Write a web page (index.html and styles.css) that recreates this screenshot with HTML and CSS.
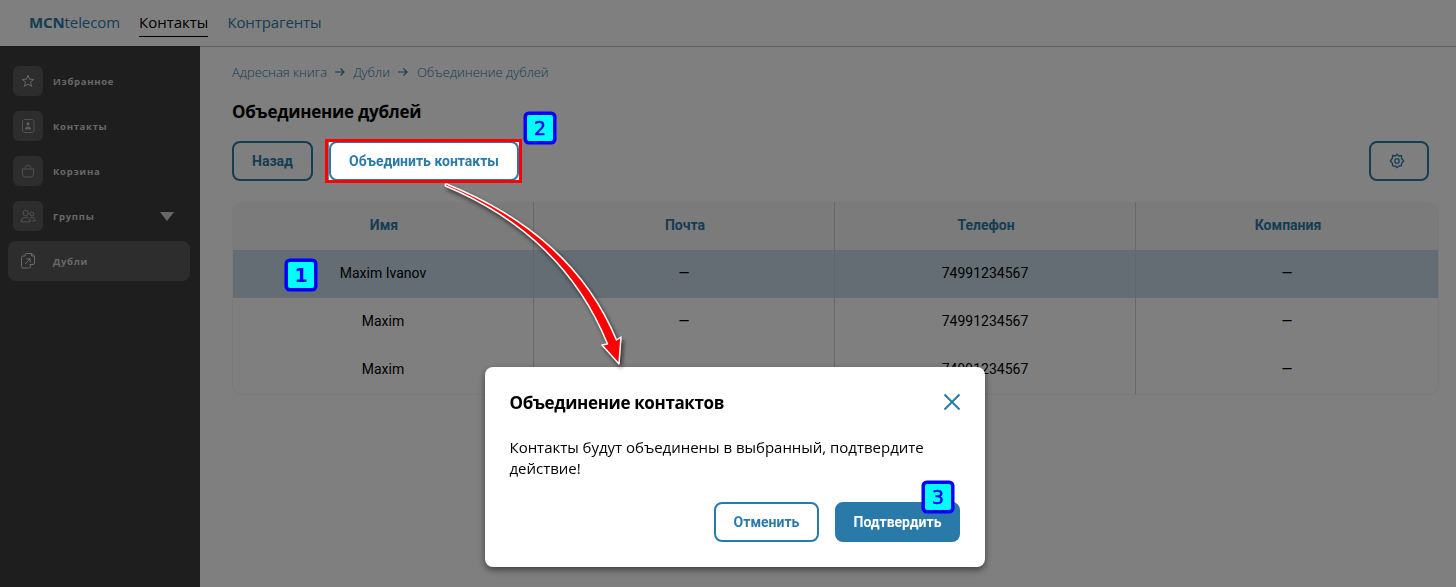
FILE: index.html
```html
<!DOCTYPE html>
<html lang="ru">
<head>
    <meta charset="UTF-8">
    <meta name="viewport" content="width=device-width, initial-scale=1.0">
    <title>Объединение дублей</title>
    <link rel="stylesheet" href="styles.css">
</head>
<body>
    <!-- Top navigation -->
    <header class="header">
        <a class="logo"><b>MCN</b>telecom</a>
        <nav class="nav">
            <a class="nav-link active">Контакты</a>
            <a class="nav-link agents">Контрагенты</a>
        </nav>
    </header>

    <div class="layout">
        <!-- Sidebar -->
        <aside class="sidebar">
            <a class="side-item">
                <span class="side-icon bright"><svg width="16" height="16" viewBox="0 0 16 16"><path d="M8 2.300l1.600 3.900 4.100.2-3.200 2.700 1.100 4.200L8 11.100l-3.600 2.200 1.100-4.200L2.300 6.400l4.100-.2z"/></svg></span>
                <span class="side-text">Избранное</span>
            </a>
            <a class="side-item">
                <span class="side-icon"><svg width="16" height="16" viewBox="0 0 16 16"><path d="M4 1.500h8.500L14 3v10l-1.500 1.500H4L2.500 13V3z"/><circle class="fill" cx="8" cy="5.900" r="1.700"/><path class="fill" d="M4.800 11.500c0-2.200 1.200-3 3.200-3s3.200.8 3.200 3z"/></svg></span>
                <span class="side-text">Контакты</span>
            </a>
            <a class="side-item">
                <span class="side-icon"><svg width="16" height="16" viewBox="0 0 16 16"><path d="M2 6h12l-.9 6.300q-.2 1.700-1.900 1.700H4.800q-1.700 0-1.900-1.700zM5 5.500C5.200 3.500 6.300 2.500 8 2.500s2.800 1 3 3"/></svg></span>
                <span class="side-text">Корзина</span>
            </a>
            <a class="side-item">
                <span class="side-icon"><svg width="16" height="16" viewBox="0 0 16 16"><circle cx="5.700" cy="5" r="2.700"/><circle cx="11.900" cy="6" r="1.900"/><path d="M1 13.900c0-6 9.400-6 9.400 0zM10.200 9.900c2.800-1 5 .3 5 3h-3"/></svg></span>
                <span class="side-text">Группы</span>
                <span class="caret"></span>
            </a>
            <a class="side-item selected">
                <span class="side-icon bright"><svg width="16" height="18" viewBox="0 0 16 18"><path d="M5 4V3q0-1.500 1.500-1.500h5.300L14.500 4v7q0 1.500-1.500 1.500H9.500M11.500 1.500V4h3M5 4H3Q1.500 4 1.500 5.500v9Q1.500 16 3 16h6q1.500 0 1.500-1.500v-2M5 12l5-5M6.500 6.800h3.700v3.500"/></svg></span>
                <span class="side-text">Дубли</span>
            </a>
        </aside>

        <!-- Content -->
        <main class="content">
            <div class="breadcrumbs">
                <a>Адресная книга</a>
                <svg width="10" height="10" viewBox="0 0 10 10"><path d="M0 5h9M5.500 1.500L9 5 5.500 8.500"/></svg>
                <a>Дубли</a>
                <svg width="10" height="10" viewBox="0 0 10 10"><path d="M0 5h9M5.500 1.500L9 5 5.500 8.500"/></svg>
                <a>Объединение дублей</a>
            </div>
            <h1>Объединение дублей</h1>

            <div class="toolbar">
                <button class="btn back">Назад</button>
                <div class="step-target">
                    <button class="btn merge">Объединить контакты</button>
                    <span class="step step-2">2</span>
                </div>
                <button class="btn settings"><svg width="16" height="16" viewBox="0 0 16 16"><path d="M8 1.300L9.800 3l2.600-.4.200 2.600L14.700 8l-2.100 2.200-.2 2.500-2.600.3L8 14.700 6.200 13l-2.600-.3-.2-2.500L1.300 8l2.100-2.800.2-2.600L6.200 3z"/><rect x="5.900" y="5.900" width="4.200" height="4.200" rx="1.300"/></svg></button>
            </div>

            <div class="table">
                <div class="row head">
                    <div class="cell">Имя</div>
                    <div class="cell">Почта</div>
                    <div class="cell">Телефон</div>
                    <div class="cell">Компания</div>
                </div>
                <div class="row picked">
                    <div class="cell">Maxim Ivanov<span class="step step-1">1</span></div>
                    <div class="cell">—</div>
                    <div class="cell">74991234567</div>
                    <div class="cell">—</div>
                </div>
                <div class="row">
                    <div class="cell">Maxim</div>
                    <div class="cell">—</div>
                    <div class="cell">74991234567</div>
                    <div class="cell">—</div>
                </div>
                <div class="row">
                    <div class="cell">Maxim</div>
                    <div class="cell">—</div>
                    <div class="cell">74991234567</div>
                    <div class="cell">—</div>
                </div>
            </div>
        </main>
    </div>

    <div class="overlay"></div>

    <!-- Confirm dialog -->
    <div class="modal">
        <div class="modal-head">
            <h2>Объединение контактов</h2>
            <svg class="close" width="18" height="18" viewBox="0 0 18 18"><path d="M1.500 1.500l15 15M16.500 1.500l-15 15"/></svg>
        </div>
        <p>Контакты будут объединены в выбранный, подтвердите<br>действие!</p>
        <div class="modal-actions">
            <button class="btn cancel">Отменить</button>
            <button class="btn confirm">Подтвердить<span class="step step-3">3</span></button>
        </div>
    </div>

    <!-- Arrow from the button to the dialog -->
    <svg class="arrow" width="220" height="210" viewBox="430 170 220 210">
        <path d="M446.500 184Q573 235 616.500 340L621 337 619 364 602 345 607.500 344Q563 235 445.500 186Q444.500 184 446.500 184z"/>
    </svg>
</body>
</html>
```
FILE: styles.css
```css
* {
    margin: 0;
    padding: 0;
    box-sizing: border-box;
}

body {
    height: 587px;
    overflow: hidden;
    display: flex;
    flex-direction: column;
    background: white;
    color: black;
    font-family: 'Open Sans', 'Noto Sans', sans-serif;
}
svg {
    fill: none;
    stroke: #2a7aa9;
}

/* Header */
.header {
    height: 46px;
    display: flex;
    align-items: flex-start;
    padding: 9px 29px 0;
    color: #2a7aa9;
    box-shadow: 0 1px 0 #bebebe;
    font-size: 15px;
    line-height: 27px;
}
.logo {
    width: 110px;
    letter-spacing: -0.1px;
}
.nav {
    display: flex;
    gap: 19px;
}
.nav-link.active {
    height: 28px;
    color: black;
    border-bottom: 1px solid black;
}
.agents {
    letter-spacing: -0.1px;
}

.layout {
    flex: 1;
    display: flex;
}

/* Sidebar */
.sidebar {
    width: 200px;
    padding: 15px 10px 0 8px;
    background: #3c3c3c;
    display: flex;
    flex-direction: column;
    gap: 5px;
}
.side-item {
    height: 40px;
    display: flex;
    align-items: center;
    padding: 0 16px 0 5px;
    gap: 10px;
    border-radius: 8px;
    color: #d0d0d0;
    font-size: 9.5px;
    font-weight: bold;
    letter-spacing: 0.7px;
}
.side-text {
    padding-top: 1px;
}
.side-icon {
    flex: none;
    width: 30px;
    height: 30px;
    display: flex;
    align-items: center;
    justify-content: center;
    background: #5a5a5a;
    border-radius: 6px;
}
.side-icon svg {
    stroke: #a4a4a4;
}
.side-icon.bright svg {
    stroke: #d0d0d0;
}
.side-icon .fill {
    fill: #b8b8b8;
    stroke: none;
}
.selected {
    background: #5a5a5a;
}
.caret {
    margin-left: auto;
    border: 7px solid transparent;
    border-top: 9px solid #d0d0d0;
    border-bottom: none;
}

/* Content */
.content {
    flex: 1;
    padding: 16px 17px 0 32px;
}
.breadcrumbs {
    display: flex;
    align-items: center;
    gap: 8px;
    color: #2a7aa9;
    font-size: 13px;
    font-weight: 300;
    line-height: 20px;
}
.breadcrumbs a:last-child {
    margin-left: 1px;
}
.breadcrumbs svg {
    stroke-width: 1.2;
}
h1 {
    margin-top: 16px;
    font-size: 17px;
    line-height: 28px;
    font-weight: 700;
    letter-spacing: -0.25px;
}
.toolbar {
    display: flex;
    margin-top: 15px;
}
.btn {
    height: 40px;
    border: 2px solid #2a7aa9;
    border-radius: 8px;
    background: white;
    color: #2a7aa9;
    font-family: Roboto, sans-serif;
    font-size: 14px;
    font-weight: bold;
}
.back {
    width: 81px;
}
.step-target {
    position: relative;
    z-index: 2;
    margin-left: 16px;
    background: white;
}
.step-target::after {
    content: "";
    position: absolute;
    left: -4px;
    top: -2px;
    box-sizing: border-box;
    width: 197px;
    height: 44px;
    border: 3px solid red;
}
.merge {
    display: block;
    width: 190px;
}
.settings {
    width: 60px;
    margin-left: auto;
    margin-right: 10px;
    padding-right: 4px;
}
.settings svg {
    display: block;
    margin: auto;
    stroke-width: 1.3;
}

/* Table */
.table {
    margin-top: 21px;
    height: 193px;
    border-radius: 10px;
    border: 1px solid #f4f4f4;
    border-top: none;
    font-family: Roboto, sans-serif;
    font-size: 14px;
}
.row {
    display: grid;
    grid-template-columns: 301px 301px 301px 1fr;
    height: 48px;
}
.cell {
    position: relative;
    display: flex;
    align-items: center;
    justify-content: center;
    padding-bottom: 2px;
    border-right: 1px solid #d0d0d0;
}
.cell:last-child {
    border-right: none;
}
.head {
    background: #f6f6f6;
    border-radius: 10px 10px 0 0;
    color: #2a7aa9;
    font-weight: bold;
}
.head .cell {
    padding-left: 2px;
}
.picked {
    background: #c6dbe6;
}
.picked .cell {
    border-color: #c0d0da;
}

.overlay {
    position: fixed;
    inset: 0;
    z-index: 1;
    background: rgba(0, 0, 0, 0.5);
}

/* Dialog */
.modal {
    position: fixed;
    left: 485px;
    top: 367px;
    z-index: 3;
    width: 500px;
    height: 200px;
    padding: 23px 25px 0 24.5px;
    background: white;
    border-radius: 8px;
    box-shadow: 0 3px 7px rgba(0, 0, 0, 0.5);
}
.modal-head {
    display: flex;
    align-items: center;
    justify-content: space-between;
}
.modal h2 {
    font-size: 17px;
    line-height: 26px;
    letter-spacing: -0.36px;
}
.close {
    stroke-width: 2;
    margin: 0 -1px 2px 0;
}
.modal p {
    margin-top: 21px;
    font-size: 15px;
    line-height: 21px;
    letter-spacing: -0.02px;
}
.modal-actions {
    display: flex;
    justify-content: flex-end;
    gap: 16px;
    margin-top: 23px;
}
.cancel {
    width: 105px;
}
.confirm {
    position: relative;
    width: 125px;
    background: #2a7aa9;
    color: white;
}

/* Step badges */
.step {
    position: absolute;
    z-index: 4;
    width: 26px;
    height: 26px;
    border-radius: 2px;
    background: cyan;
    box-shadow: 0 0 0 3.5px blue;
    color: blue;
    font: 19px/26px 'DejaVu Sans', sans-serif;
    -webkit-text-stroke: 0.5px blue;
    text-align: center;
}
.step-1 {
    left: 55px;
    top: 12px;
    font-weight: bold;
    -webkit-text-stroke-width: 0;
}
.step-2 {
    left: 198px;
    top: -26px;
}
.step-3 {
    left: 88px;
    top: -20px;
}

.arrow {
    position: fixed;
    left: 430px;
    top: 170px;
    z-index: 5;
    filter: drop-shadow(2px 3px 2px rgba(0, 0, 0, 0.6));
}
.arrow path {
    fill: red;
    stroke: white;
    stroke-width: 1.5;
    stroke-linejoin: round;
}
```
